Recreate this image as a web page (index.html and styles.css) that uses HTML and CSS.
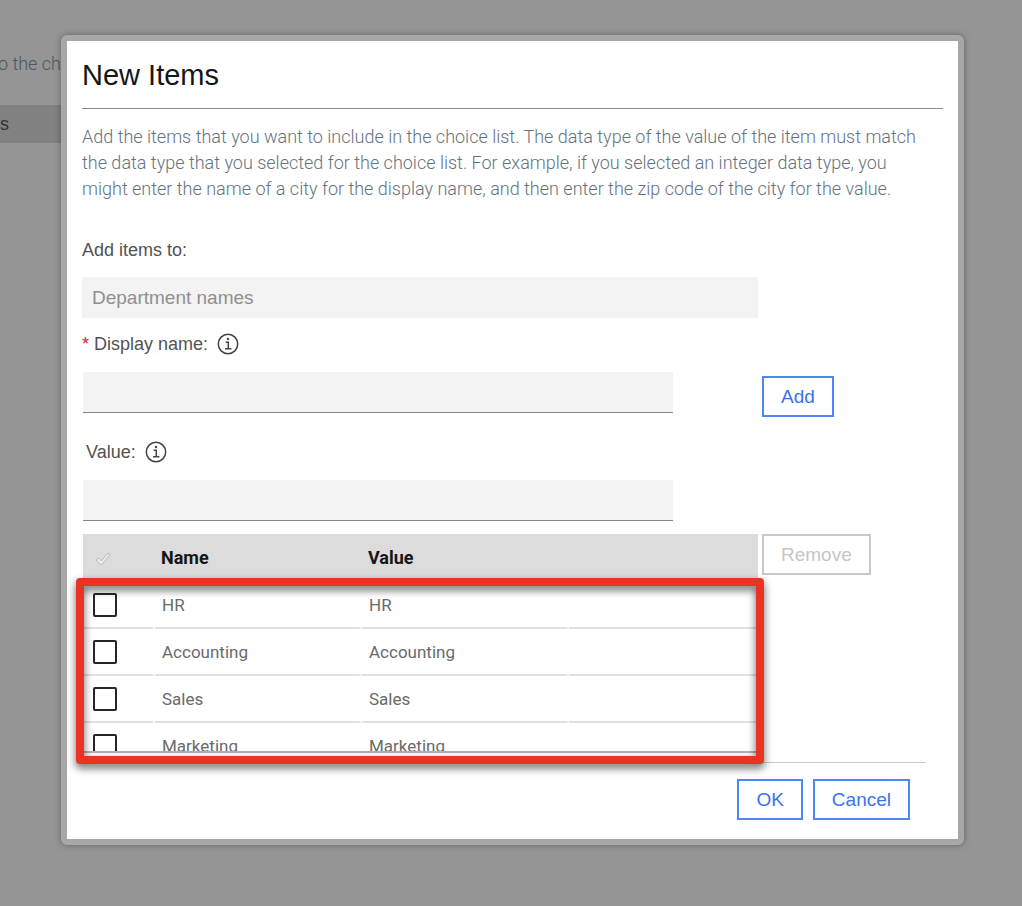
FILE: index.html
```html
<!DOCTYPE html>
<html lang="en">
<head>
<meta charset="utf-8">
<title>New Items</title>
<link rel="stylesheet" href="styles.css">
</head>
<body>
<div class="backdrop">
  <p class="backdrop-text">o the ch</p>
  <p class="backdrop-row">s</p>
</div>
<main class="dialog" role="dialog" aria-labelledby="dialog-title">
  <h1 class="dialog-title" id="dialog-title">New Items</h1>
  <p class="intro">Add the items that you want to include in the choice list. The data type of the value of the item must match the data type that you selected for the choice list. For example, if you selected an integer data type, you might enter the name of a city for the display name, and then enter the zip code of the city for the value.</p>
  <form>
    <div class="form-row parent-row">
      <div>
        <label class="label" for="parent">Add items to:</label>
        <input class="input parent-input" id="parent" type="text" value="Department names" disabled>
      </div>
    </div>
    <div class="form-row">
      <div class="fields">
        <div class="label-line">
          <label class="label" for="display-name"><span class="required">*</span> Display name:</label>
          <svg class="info" viewBox="0 0 22 22" aria-hidden="true"><circle cx="11" cy="11" r="9.7"/><path d="M8.700 9.300h2.600v6.200M8 15.700h6.400"/><circle class="dot" cx="11" cy="6" r="1.2"/></svg>
        </div>
        <input class="input" id="display-name" type="text">
        <div class="label-line value-line">
          <label class="label" for="value">Value:</label>
          <svg class="info" viewBox="0 0 22 22" aria-hidden="true"><circle cx="11" cy="11" r="9.7"/><path d="M8.700 9.300h2.600v6.200M8 15.700h6.400"/><circle class="dot" cx="11" cy="6" r="1.2"/></svg>
        </div>
        <input class="input" id="value" type="text">
      </div>
      <div class="add-side"><button class="button" type="button">Add</button></div>
    </div>
    <div class="form-row items-row">
      <div class="items">
        <div class="items-scroll">
          <table class="items-table">
            <colgroup><col class="col-check"><col class="col-text"><col class="col-text"><col></colgroup>
            <thead>
              <tr>
                <th><svg class="tick" viewBox="0 0 16 14" aria-hidden="true"><path d="M1 8l2.300-2 3 3L13 1l2 1.500L6.500 13z"/></svg></th>
                <th>Name</th><th>Value</th><th></th>
              </tr>
            </thead>
            <tbody>
              <tr><td><input class="check" type="checkbox" aria-label="HR"></td><td>HR</td><td>HR</td><td></td></tr>
              <tr><td><input class="check" type="checkbox" aria-label="Accounting"></td><td>Accounting</td><td>Accounting</td><td></td></tr>
              <tr><td><input class="check" type="checkbox" aria-label="Sales"></td><td>Sales</td><td>Sales</td><td></td></tr>
              <tr><td><input class="check" type="checkbox" aria-label="Marketing"></td><td>Marketing</td><td>Marketing</td><td></td></tr>
            </tbody>
          </table>
        </div>
        <div class="highlight"></div>
      </div>
      <div><button class="button" type="button" disabled>Remove</button></div>
    </div>
    <div class="actions">
      <button class="button" type="submit">OK</button>
      <button class="button" type="button">Cancel</button>
    </div>
  </form>
</main>
</body>
</html>
```

FILE: styles.css
```css
* {
  box-sizing: border-box;
}

body {
  margin: 0;
  min-height: 100vh;
  padding: 35px 58px 61px 61px;
  background: #959595;
  font-family: "Liberation Sans", Arial, sans-serif;
  font-size: 18px;
  line-height: 24px;
  color: #555;
}

.backdrop {
  position: absolute;
  inset: 0 auto 0 0;
  width: 61px;
  padding-top: 52px;
}

.backdrop-text {
  display: flex;
  justify-content: flex-end;
  margin: 0 0 29px;
  white-space: nowrap;
  font-family: Roboto, sans-serif;
  font-size: 18px;
  font-weight: 300;
  color: #4a5560;
}

.backdrop-row {
  margin: 0;
  line-height: 38px;
  background: #818181;
  color: #333;
}

.dialog {
  position: relative;
  padding: 18px 15px 19px;
  background: #fff;
  background-clip: padding-box;
  border: 6px solid #a7a7a7;
  border-radius: 6px;
  box-shadow: 0 0 6px rgba(0, 0, 0, 0.35);
}

.dialog-title {
  margin: 0;
  padding-bottom: 17px;
  border-bottom: 1px solid #8c8c8c;
  font-size: 29px;
  font-weight: 400;
  line-height: 32px;
  color: #161616;
}

.intro {
  margin: 15px 20px 0 0;
  font-family: Roboto, sans-serif;
  font-size: 18px;
  font-weight: 300;
  line-height: 26px;
  color: #64727e;
}

.form-row {
  display: grid;
  grid-template-columns: minmax(0, 1fr) 181px;
  column-gap: 4px;
}

.parent-row {
  margin: 36px 0 14px;
}

.label {
  display: block;
  color: #525252;
}

.required {
  color: #e32020;
}

.label-line {
  display: flex;
  align-items: center;
  gap: 9px;
  margin-left: -1px;
}

.value-line {
  margin: 27px 0 0 3px;
}

.info {
  width: 22px;
  height: 22px;
  fill: none;
  stroke: #444;
  stroke-width: 1.5;
}

.info .dot {
  fill: #444;
  stroke: none;
}

.fields {
  padding: 0 85px 0 1px;
}

.input {
  display: block;
  width: 100%;
  height: 41px;
  margin-top: 16px;
  padding: 0 10px;
  border: 0;
  border-bottom: 1px solid #858585;
  border-radius: 0;
  background: #f3f3f3;
  font: inherit;
  font-size: 19px;
  color: #333;
}

.parent-input {
  margin-top: 15px;
  border-bottom: 0;
  color: #8f8f8f;
}

.add-side {
  padding-top: 44px;
}

.button {
  height: 41px;
  padding: 0 17px;
  border: 2px solid #4d86f7;
  background: #fff;
  font: inherit;
  font-size: 19px;
  color: #3a72f0;
}

.button:disabled {
  border-color: #c8c8c8;
  color: #c6c6c6;
}

.items-row {
  margin-top: 13px;
}

.items {
  position: relative;
  padding-left: 1px;
}

.items-scroll {
  height: 219px;
  overflow-y: auto;
  scrollbar-width: none;
  border-bottom: 2px solid #b0b0b0;
}

.items-table {
  width: 100%;
  table-layout: fixed;
  border-spacing: 0;
  font-family: Roboto, sans-serif;
  font-size: 17px;
  color: #6a6a6a;
}

.col-check {
  width: 72px;
}

.col-text {
  width: 207px;
}

.items-table th {
  position: sticky;
  top: 0;
  height: 48px;
  padding: 0 6px;
  background: #dcdcdc;
  text-align: left;
  font-size: 18px;
  font-weight: 700;
  color: #161616;
}

.items-table td {
  height: 47px;
  padding: 0 7px;
  border-right: 3px solid #fff;
  border-bottom: 2px solid #e0e0e0;
}

.items-table th:first-child {
  padding-left: 12px;
}

.items-table td:first-child {
  padding-left: 10px;
}

.tick {
  display: block;
  width: 16px;
  height: 14px;
  margin-top: 2px;
  fill: #eee;
  stroke: #bbb;
  stroke-width: 1;
}

.check {
  display: block;
  width: 24px;
  height: 24px;
  margin: 0;
  appearance: none;
  border: 2px solid #262626;
  border-radius: 2px;
  background: #fff;
}

.highlight {
  position: absolute;
  z-index: 1;
  inset: 44px -6px -11px;
  border: 8px solid #ea3323;
  border-radius: 4px;
  filter: drop-shadow(0 4px 4px rgba(0, 0, 0, 0.6));
  pointer-events: none;
}

.actions {
  display: flex;
  justify-content: flex-end;
  gap: 10px;
  margin: 9px 17px 0;
  padding: 16px 16px 0;
  border-top: 1px solid #c8c8c8;
}
```
